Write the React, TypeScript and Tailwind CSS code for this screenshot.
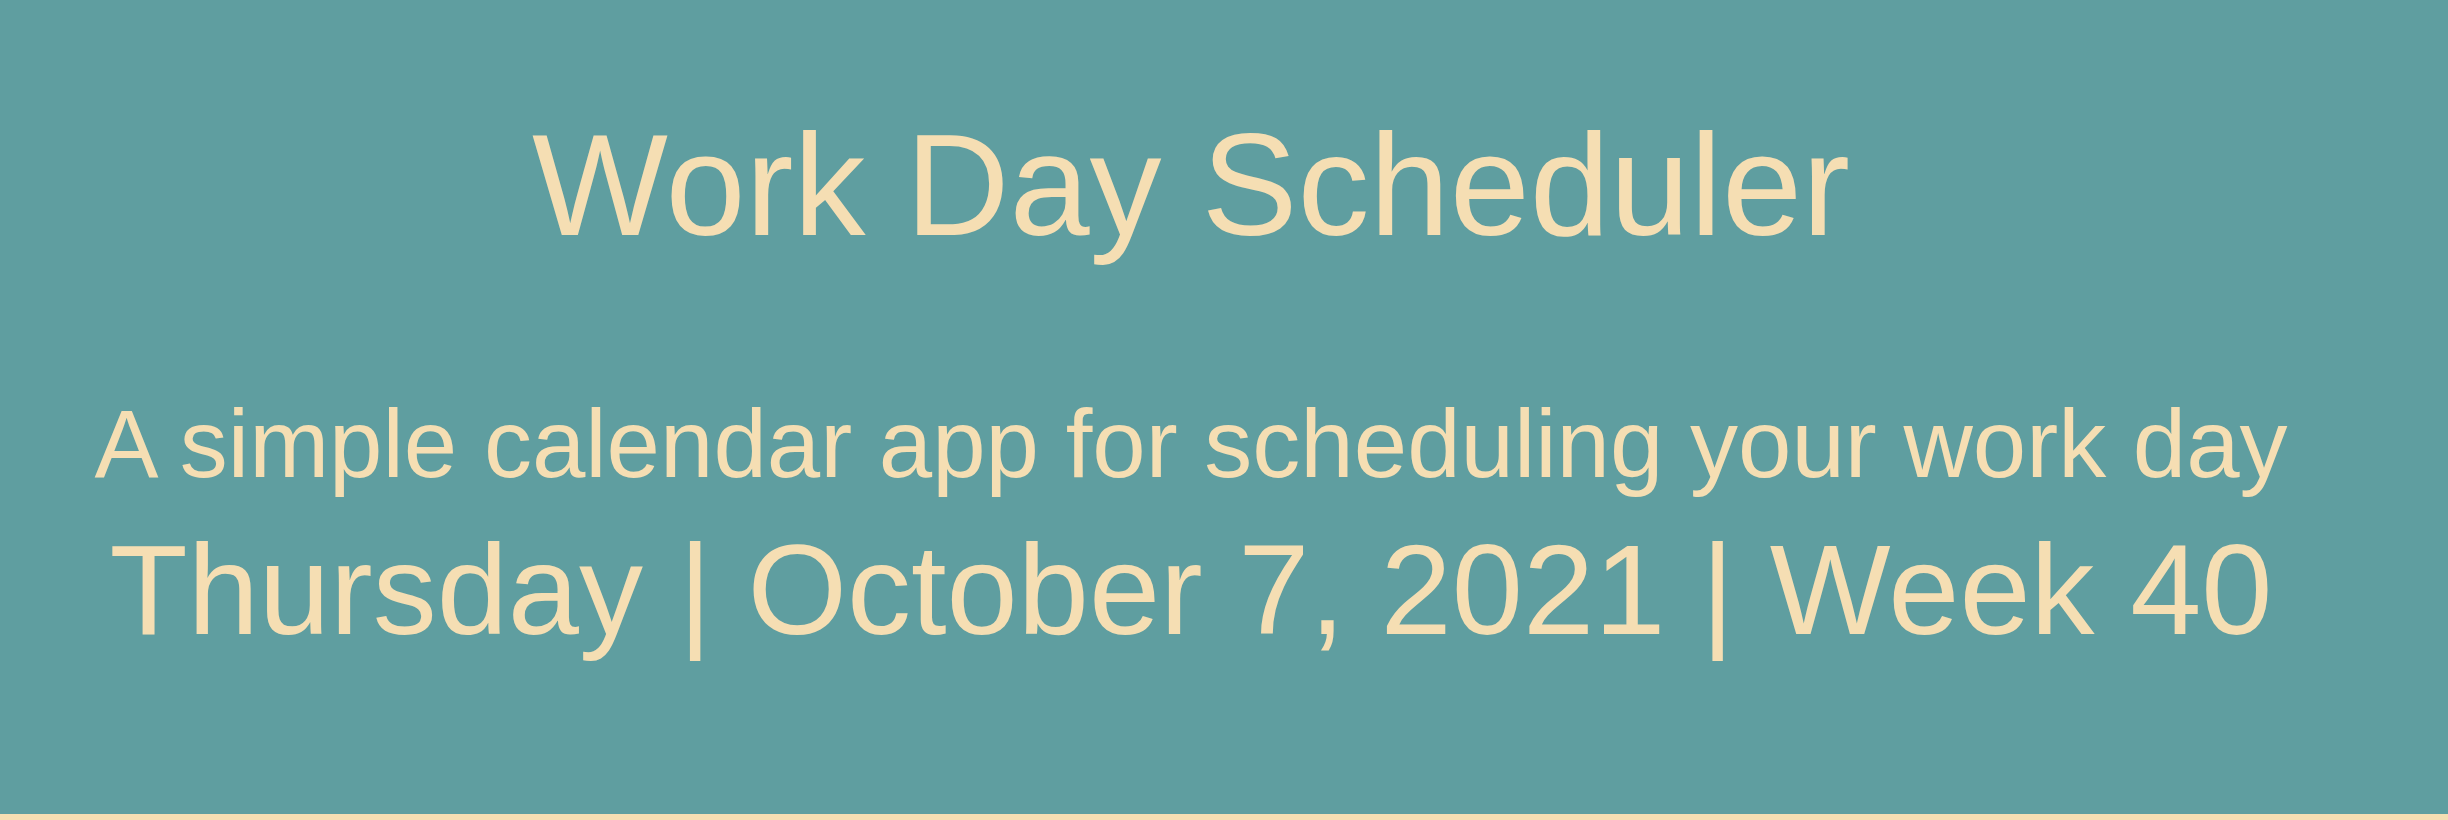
export default function App() {
  return (
    <header
      className="w-full h-[820px] bg-[#5f9ea0] border-b-[6px] border-[#f5deb3] text-[#f5deb3] flex flex-col items-center pt-[114px] pr-[66px]"
      style={{ fontFamily: '"Liberation Sans", Arial, sans-serif' }}
    >
      <h1 className="text-[144px] leading-none whitespace-nowrap">Work Day Scheduler</h1>
      <p className="mt-[138px] text-[96px] leading-none whitespace-nowrap">
        A simple calendar app for scheduling your work day
      </p>
      <p className="mt-[34px] text-[128px] leading-none whitespace-nowrap">
        Thursday | October 7, 2021 | Week 40
      </p>
    </header>
  );
}
